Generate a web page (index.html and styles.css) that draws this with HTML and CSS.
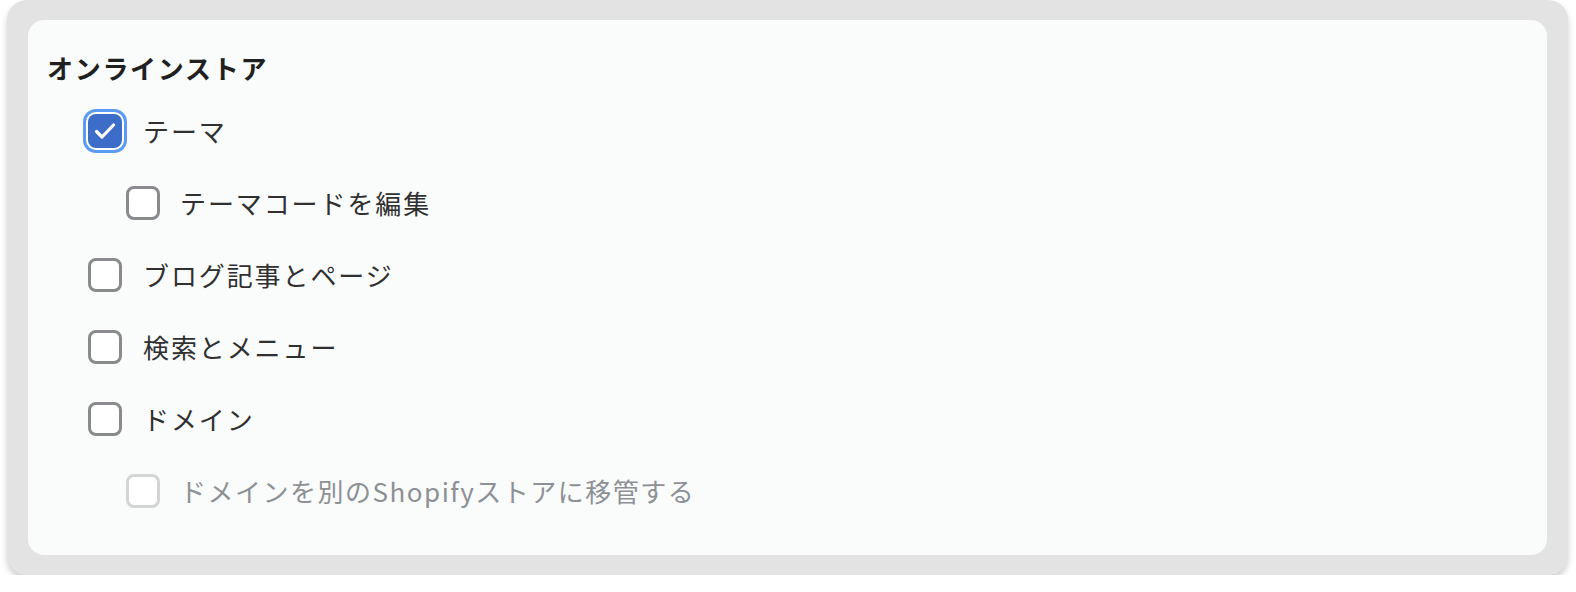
FILE: index.html
```html
<!DOCTYPE html>
<html lang="ja">
<head>
<meta charset="utf-8">
<link rel="stylesheet" href="styles.css">
</head>
<body>
<div class="frame">
  <div class="card">
    <h2 class="title">オンラインストア</h2>
    <ul class="list">
      <li class="row lvl1">
        <span class="box checked">
          <svg class="check" viewBox="0 0 24 24" width="24" height="24"><path d="M3.5 12.5l5.5 5.5L20.5 6" fill="none" stroke="#fff" stroke-width="3.2" stroke-linecap="round" stroke-linejoin="round"/></svg>
        </span>
        <span class="label">テーマ</span>
      </li>
      <li class="row lvl2">
        <span class="box"></span>
        <span class="label">テーマコードを編集</span>
      </li>
      <li class="row lvl1">
        <span class="box"></span>
        <span class="label">ブログ記事とページ</span>
      </li>
      <li class="row lvl1">
        <span class="box"></span>
        <span class="label">検索とメニュー</span>
      </li>
      <li class="row lvl1">
        <span class="box"></span>
        <span class="label">ドメイン</span>
      </li>
      <li class="row lvl2 disabled">
        <span class="box"></span>
        <span class="label">ドメインを別のShopifyストアに移管する</span>
      </li>
    </ul>
  </div>
</div>
</body>
</html>
```

FILE: styles.css
```css
html, body {
  margin: 0;
  padding: 0;
  background: #ffffff;
}
body {
  font-family: "Noto Sans CJK JP", "Noto Sans", sans-serif;
  color: #303030;
}
.frame {
  margin-left: 7px;
  width: 1561px;
  height: 575px;
  box-sizing: border-box;
  padding: 20px 21px;
  background: #e3e3e3;
  border-radius: 20px;
  box-shadow: 0 4px 6px rgba(0, 0, 0, 0.2);
}
.card {
  height: 535px;
  box-sizing: border-box;
  background: #fafbfb;
  border-radius: 16px;
  padding: 30px 19px 28px;
}
.title {
  margin: 0;
  font-size: 26px;
  font-weight: 700;
  line-height: 36px;
  letter-spacing: 1.7px;
  color: #202020;
}
.list {
  list-style: none;
  margin: 9px 0 0;
  padding: 0;
}
.row {
  height: 72px;
  display: flex;
  align-items: center;
  gap: 21px;
}
.lvl1 { padding-left: 41px; }
.lvl2 { padding-left: 79px; gap: 20px; }
.box {
  width: 34px;
  height: 34px;
  box-sizing: border-box;
  border: 3px solid #8a8a8e;
  border-radius: 8px;
  background: #ffffff;
  flex: none;
  display: flex;
  align-items: center;
  justify-content: center;
}
.box.checked {
  border: none;
  background: #3c6dc8;
  box-shadow: 0 0 0 2px #ffffff, 0 0 0 5px #5b9bf6;
}
.check {
  display: block;
  flex: none;
}
.label {
  font-size: 26px;
  line-height: 36px;
  letter-spacing: 1.9px;
}
.disabled .box {
  border-color: #d3d4d6;
}
.disabled .label {
  color: #8d9095;
  letter-spacing: 1.5px;
}
```
